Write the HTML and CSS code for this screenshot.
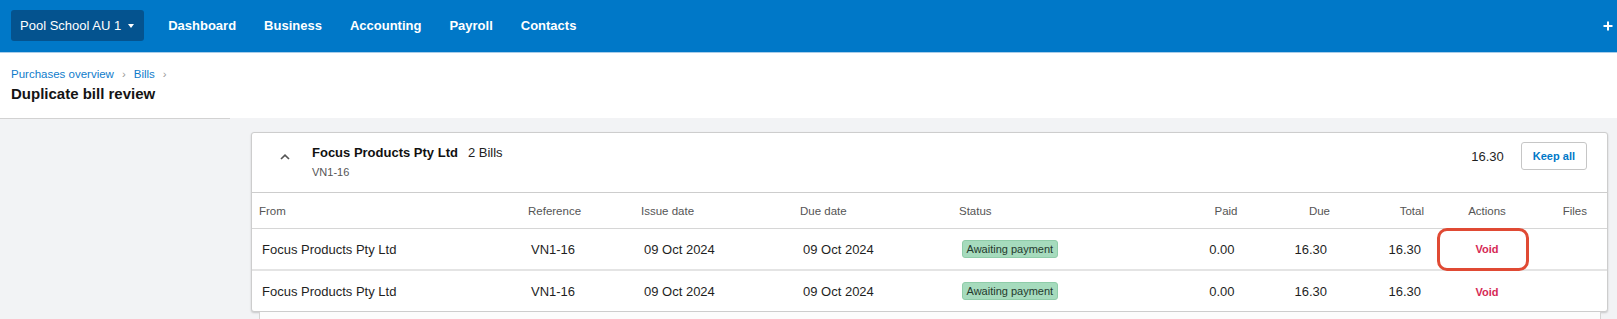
FILE: index.html
```html
<!DOCTYPE html>
<html lang="en">
<head>
<meta charset="utf-8">
<title>Duplicate bill review</title>
<link rel="stylesheet" href="styles.css">
</head>
<body>
<nav class="topbar">
  <button class="org">Pool School AU 1<span class="caret"></span></button>
  <a class="nav-link" href="#">Dashboard</a>
  <a class="nav-link" href="#">Business</a>
  <a class="nav-link" href="#">Accounting</a>
  <a class="nav-link" href="#">Payroll</a>
  <a class="nav-link" href="#">Contacts</a>
  <span class="spacer"></span>
  <svg class="plus" width="10" height="10" viewBox="0 0 10 10" aria-hidden="true"><path d="M5 0.5V9.5M0.5 5H9.5" stroke="#fff" stroke-width="2" fill="none"/></svg>
</nav>
<header class="page-head">
  <div class="crumbs"><a href="#">Purchases overview</a><span class="sep">›</span><a href="#">Bills</a><span class="sep">›</span></div>
  <h1 class="title">Duplicate bill review</h1>
</header>
<div class="layout">
  <aside class="side"></aside>
  <main class="content">
    <section class="card">
      <div class="card-head">
        <div class="head-left">
          <svg class="chev" width="10" height="6" viewBox="0 0 10 6" aria-hidden="true"><polyline points="1,5 5,1.2 9,5" fill="none" stroke="#555" stroke-width="1.7"/></svg>
          <div class="head-text">
            <div class="head-title"><strong>Focus Products Pty Ltd</strong><span class="count">2 Bills</span></div>
            <div class="head-sub">VN1-16</div>
          </div>
        </div>
        <div class="head-right">
          <span class="head-total">16.30</span>
          <button class="keep">Keep all</button>
        </div>
      </div>
      <div class="row thead">
        <div class="cell">From</div>
        <div class="cell">Reference</div>
        <div class="cell">Issue date</div>
        <div class="cell">Due date</div>
        <div class="cell">Status</div>
        <div class="cell num">Paid</div>
        <div class="cell num">Due</div>
        <div class="cell num">Total</div>
        <div class="cell mid">Actions</div>
        <div class="cell num">Files</div>
      </div>
      <div class="row tbody first">
        <div class="cell">Focus Products Pty Ltd</div>
        <div class="cell">VN1-16</div>
        <div class="cell">09 Oct 2024</div>
        <div class="cell">09 Oct 2024</div>
        <div class="cell"><span class="badge">Awaiting payment</span></div>
        <div class="cell num">0.00</div>
        <div class="cell num">16.30</div>
        <div class="cell num">16.30</div>
        <div class="cell mid action"><a class="void" href="#">Void</a><span class="annot"></span></div>
        <div class="cell num"></div>
      </div>
      <div class="row tbody">
        <div class="cell">Focus Products Pty Ltd</div>
        <div class="cell">VN1-16</div>
        <div class="cell">09 Oct 2024</div>
        <div class="cell">09 Oct 2024</div>
        <div class="cell"><span class="badge">Awaiting payment</span></div>
        <div class="cell num">0.00</div>
        <div class="cell num">16.30</div>
        <div class="cell num">16.30</div>
        <div class="cell mid"><a class="void" href="#">Void</a></div>
        <div class="cell num"></div>
      </div>
    </section>
    <div class="card-stack"></div>
  </main>
</div>
</body>
</html>
```

FILE: styles.css
```css
html {
  overflow: hidden;
}

body {
  margin: 0;
  font-family: "Liberation Sans", Arial, sans-serif;
  background: #f2f3f5;
  color: #1f1f1f;
}

/* top navigation */
.topbar {
  display: flex;
  align-items: center;
  height: 51px;
  padding: 0 4px 1px 11px;
  background: #0078c8;
  border-bottom: 1px solid #a9cde9;
}

.org {
  display: flex;
  align-items: center;
  height: 31px;
  padding: 0 10px 0 9px;
  margin-right: 10px;
  border: 0;
  border-radius: 3px;
  background: #04538f;
  color: #fff;
  font: 13px "Liberation Sans", Arial, sans-serif;
}

.caret {
  width: 0;
  height: 0;
  margin-left: 7px;
  margin-top: 1px;
  border-left: 3px solid transparent;
  border-right: 3px solid transparent;
  border-top: 4px solid #fff;
}

.nav-link {
  padding: 0 14px;
  color: #fff;
  font-size: 13px;
  font-weight: bold;
  text-decoration: none;
}

.spacer {
  flex: 1;
}

.plus {
  display: block;
}

/* page header */
.page-head {
  background: #fff;
  padding: 14px 11px 15px;
}

.crumbs {
  font-size: 11.5px;
  line-height: 14px;
}

.crumbs a {
  color: #0f7ccb;
  text-decoration: none;
}

.crumbs .sep {
  margin: 0 8px;
  color: #9a9a9a;
}

.title {
  margin: 4px 0 0;
  font-size: 15px;
  line-height: 18px;
  font-weight: bold;
  color: #141414;
}

/* body layout */
.layout {
  display: grid;
  grid-template-columns: 230px 1fr;
}

.side {
  border-top: 1px solid #d2d2d2;
}

.content {
  padding: 14px 9px 0 21px;
}

.card {
  background: #fff;
  border: 1px solid #cdcdcd;
  border-radius: 3px;
  box-shadow: 0 1px 2px rgba(0, 0, 0, 0.18);
}

.card-stack {
  height: 12px;
  margin: 0 7px 0 8px;
  background: #fcfcfc;
  border: 1px solid #d4d4d4;
  border-top: 0;
}

.card-head {
  display: flex;
  justify-content: space-between;
  align-items: flex-start;
  box-sizing: border-box;
  height: 60px;
  padding: 9px 20px 0 28px;
  border-bottom: 1px solid #cdcdcd;
}

.head-left {
  display: flex;
  align-items: flex-start;
  padding-top: 3px;
}

.chev {
  display: block;
  margin-top: 9px;
}

.head-text {
  margin-left: 22px;
}

.head-title {
  font-size: 13px;
  line-height: 16px;
  color: #111;
}

.count {
  margin-left: 10px;
  color: #222;
}

.head-sub {
  margin-top: 4px;
  font-size: 11px;
  line-height: 14px;
  color: #555;
}

.head-right {
  display: flex;
  align-items: center;
  gap: 17px;
}

.head-total {
  font-size: 13px;
  color: #1f1f1f;
}

.keep {
  height: 28px;
  padding: 0 11px;
  border: 1px solid #c6c6c6;
  border-radius: 3px;
  background: #fff;
  color: #0078c8;
  font: bold 11px "Liberation Sans", Arial, sans-serif;
}

/* table */
.row {
  display: grid;
  grid-template-columns: 269px 113px 159px 159px 200px 92.5px 92.5px 94px 112px 51px;
  align-items: center;
  padding-right: 13px;
}

.thead {
  height: 35px;
  border-bottom: 1px solid #d6d6d6;
  font-size: 11.5px;
  color: #555;
}

.thead .cell {
  padding: 0 7px;
}

.tbody {
  height: 40px;
  font-size: 13px;
  color: #1f1f1f;
}

.tbody.first {
  border-bottom: 2px solid #e4e4e4;
}

.tbody .cell {
  padding: 0 10px;
}

.cell.num {
  text-align: right;
}

.cell.mid {
  text-align: center;
}

.tbody .cell.mid {
  padding: 0;
}

.action {
  position: relative;
  align-self: stretch;
  display: flex;
  align-items: center;
  justify-content: center;
}

.badge {
  display: inline-block;
  height: 18px;
  box-sizing: border-box;
  padding: 0 3.5px;
  border: 1px solid #8fcca9;
  border-radius: 3px;
  background: #a6dbbd;
  color: #24392d;
  font-size: 11px;
  line-height: 16px;
}

.void {
  color: #d62a55;
  font-size: 11px;
  font-weight: bold;
  text-decoration: none;
}

.annot {
  position: absolute;
  left: 6px;
  top: -1px;
  width: 92px;
  height: 43px;
  box-sizing: border-box;
  border: 3px solid #e04a34;
  border-radius: 10px;
}
```
